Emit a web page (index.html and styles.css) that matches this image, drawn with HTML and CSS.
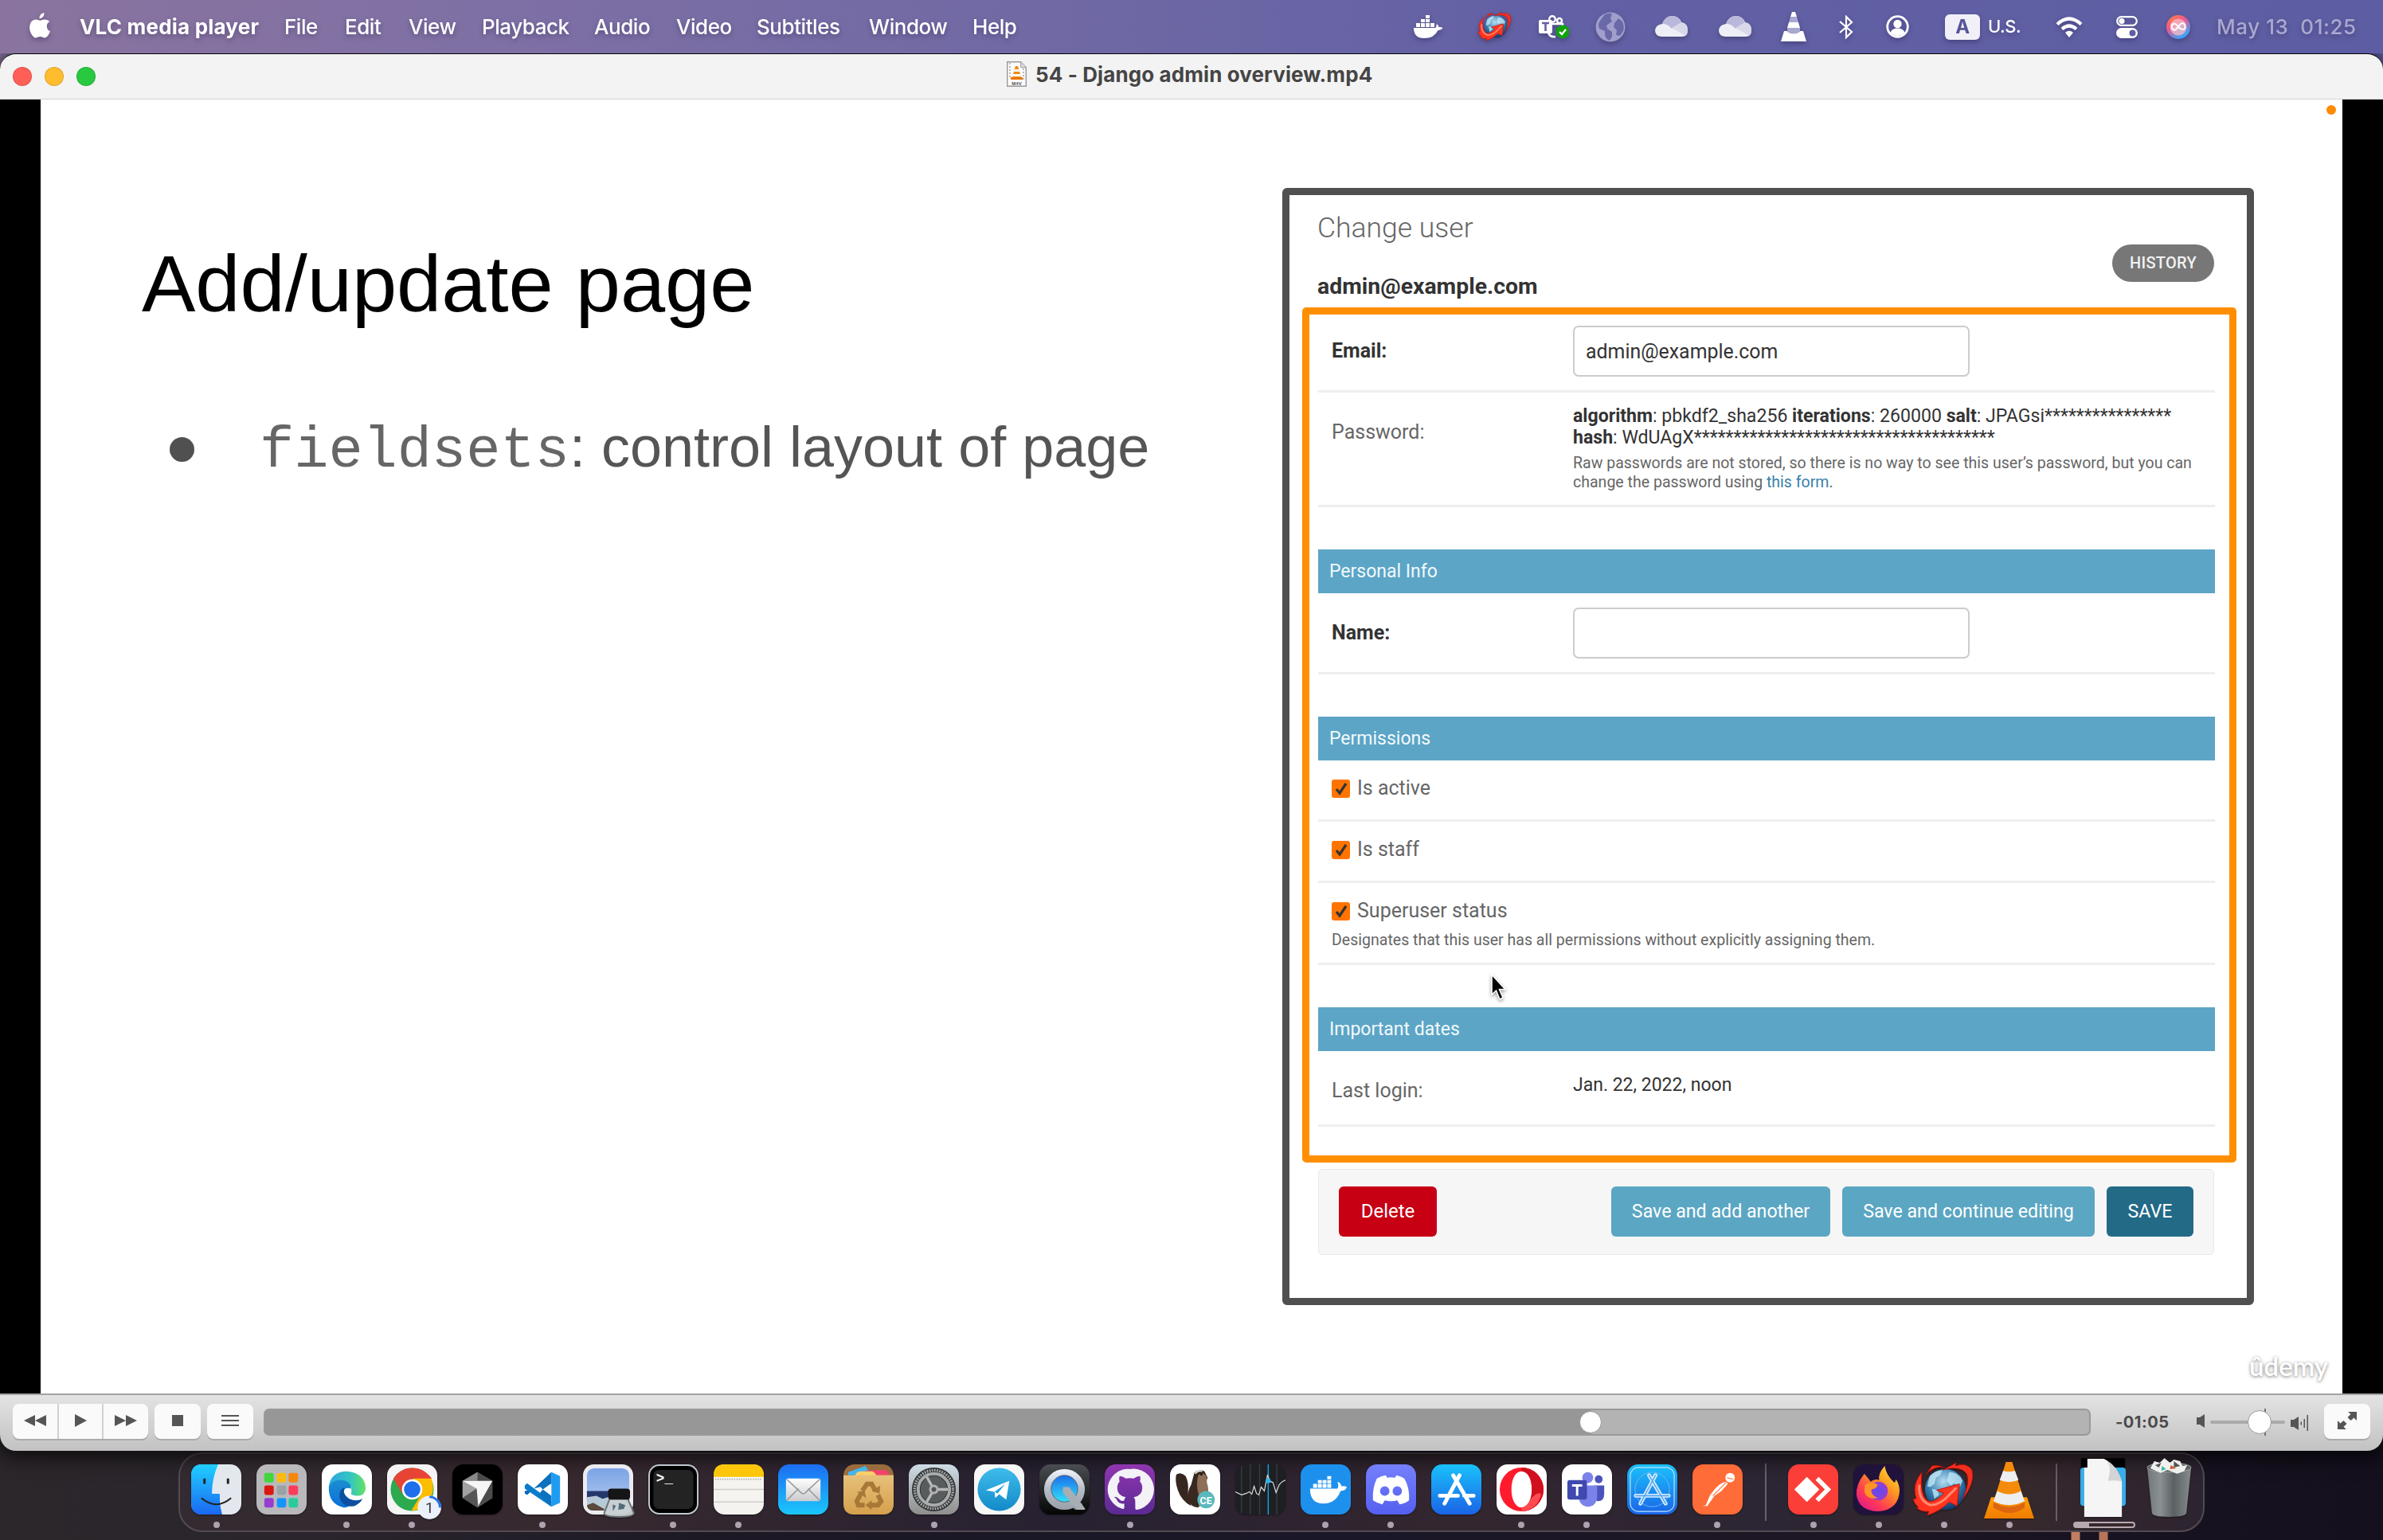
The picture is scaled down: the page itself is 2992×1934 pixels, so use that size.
FILE: index.html
```html
<!DOCTYPE html>
<html lang="en">
<head>
<meta charset="utf-8">
<title>VLC media player</title>
<link rel="stylesheet" href="styles.css">
</head>
<body>
<svg class="defs" width="0" height="0" aria-hidden="true">
  <defs>
    <linearGradient id="finder" x1="0" y1="0" x2="0" y2="1"><stop offset="0" stop-color="#1fd0ff"/><stop offset="1" stop-color="#1b68f2"/></linearGradient>
    <linearGradient id="skyblue" x1="0" y1="0" x2="0" y2="1"><stop offset="0" stop-color="#1ac1fb"/><stop offset="1" stop-color="#1a64e6"/></linearGradient>
    <linearGradient id="mailbg" x1="0" y1="0" x2="0" y2="1"><stop offset="0" stop-color="#1d6df2"/><stop offset="1" stop-color="#1ac8fc"/></linearGradient>
    <linearGradient id="silver" x1="0" y1="0" x2="0" y2="1"><stop offset="0" stop-color="#fff"/><stop offset="1" stop-color="#c9cbcf"/></linearGradient>
    <linearGradient id="steel" x1="0" y1="0" x2="0" y2="1"><stop offset="0" stop-color="#cfdde6"/><stop offset="1" stop-color="#8e8e8c"/></linearGradient>
    <linearGradient id="edgeA" x1="0" y1="0" x2="1" y2="0"><stop offset="0" stop-color="#2aa6e4"/><stop offset=".6" stop-color="#35c6c0"/><stop offset="1" stop-color="#62e35e"/></linearGradient>
    <linearGradient id="edgeB" x1="0" y1="0" x2="0" y2="1"><stop offset="0" stop-color="#1b8fd0"/><stop offset="1" stop-color="#0a6fd8"/></linearGradient>
    <linearGradient id="tele" x1="0" y1="0" x2="0" y2="1"><stop offset="0" stop-color="#3fbcec"/><stop offset="1" stop-color="#128ac8"/></linearGradient>
    <linearGradient id="dark" x1="0" y1="0" x2="0" y2="1"><stop offset="0" stop-color="#4a4e52"/><stop offset="1" stop-color="#050505"/></linearGradient>
    <linearGradient id="purple" x1="0" y1="0" x2="0" y2="1"><stop offset="0" stop-color="#9036b0"/><stop offset="1" stop-color="#5b2a93"/></linearGradient>
    <linearGradient id="disc" x1="0" y1="0" x2="0" y2="1"><stop offset="0" stop-color="#7480fb"/><stop offset="1" stop-color="#5560f0"/></linearGradient>
    <linearGradient id="paper" x1="0" y1="0" x2="0" y2="1"><stop offset="0" stop-color="#e6c07a"/><stop offset="1" stop-color="#d5a04c"/></linearGradient>
    <linearGradient id="fox" x1="1" y1="0" x2=".2" y2="1"><stop offset="0" stop-color="#fff044"/><stop offset=".4" stop-color="#ff9a1f"/><stop offset=".75" stop-color="#ff3a55"/><stop offset="1" stop-color="#e01a8a"/></linearGradient>
    <linearGradient id="cone" x1="0" y1="0" x2="0" y2="1"><stop offset="0" stop-color="#ff9d0a"/><stop offset="1" stop-color="#f07c00"/></linearGradient>
    <linearGradient id="can" x1="0" y1="0" x2="1" y2="0"><stop offset="0" stop-color="#70777a"/><stop offset=".3" stop-color="#8b9193"/><stop offset=".6" stop-color="#5b6163"/><stop offset="1" stop-color="#868c8e"/></linearGradient>
    <linearGradient id="sky" x1="0" y1="0" x2="0" y2="1"><stop offset="0" stop-color="#7ba4e6"/><stop offset="1" stop-color="#b8cdf0"/></linearGradient>
    <radialGradient id="orb" cx=".45" cy=".3" r=".75"><stop offset="0" stop-color="#b4dcf0"/><stop offset=".5" stop-color="#3c84b4"/><stop offset="1" stop-color="#0a2c5c"/></radialGradient>
    <radialGradient id="foxeye"><stop offset="0" stop-color="#5a4cf0"/><stop offset="1" stop-color="#9a3cd0"/></radialGradient>
    <linearGradient id="qt" x1="0" y1="0" x2="0" y2="1"><stop offset="0" stop-color="#f2f6fc"/><stop offset=".5" stop-color="#b4bcc8"/><stop offset="1" stop-color="#9aa0a8"/></linearGradient>
    <linearGradient id="qtin" x1="0" y1="0" x2="0" y2="1"><stop offset="0" stop-color="#1b6fe8"/><stop offset="1" stop-color="#35e0fa"/></linearGradient>
    <linearGradient id="siri" x1="0" y1="0" x2=".6" y2="1"><stop offset="0" stop-color="#ff8a30"/><stop offset=".45" stop-color="#f0568c"/><stop offset="1" stop-color="#30a8ff"/></linearGradient>
    <g id="orbicon">
      <circle cx="41" cy="34" r="26" fill="url(#orb)"/>
      <path d="M21 17q8-8 16-7l-3 6-5 3-2 8-5 4-4-1zM46 12q12 0 17 11l-3 7-8-4-4 3-5-6zM24 33l7 2 2 6-6 5z" fill="#c8ecf8" opacity=".75"/>
      <path d="M11 12Q2 24 2 34Q2 40 4 46L0 46Q1 52 7 57L4 57Q10 63 20 62L18 67Q34 62 46 50L56 55L59 27L30 35L39 39Q28 51 19 49Q8 42 11 12Z" fill="#ff3420" stroke="#c01208" stroke-width="1"/>
      <path d="M8 28Q6 48 22 54Q34 54 46 41L55 32" fill="none" stroke="#ff8a6e" stroke-width="3"/>
      <path d="M16 15Q28 3 40 6Q32 2 24 4ZM38 9L55 0L54 4Q68-1 75 9Q80 24 63 47Q73 24 68 14Q60 3 38 9Z" fill="#f2301f" stroke="#b20c08" stroke-width=".8"/>
    </g>
  </defs>
</svg>
<div class="desktop">
  <nav class="menubar">
    <svg class="i-apple" width="26" height="32" viewBox="0 0 26 32" fill="#fff"><path d="M18.5 0q.3 3-1.6 5.200q-1.900 2.200-4.400 2.100q-.2-2.900 1.600-5Q15.900.3 18.500 0zM25.300 11q-3.600 2.200-3.500 6 .1 4.700 4.200 6.300-1 3-3 5.700-1.700 2.400-3.800 2.500-1.300 0-2.800-.7-1.500-.7-3-.7-1.500 0-3.100.7-1.500.7-2.600.7-2.200 0-4.200-2.900Q0 23.800.1 18.300q.1-4.500 2.400-7.200 2.200-2.600 5.400-2.700 1.400 0 3 .7 1.900.8 2.500.8.500 0 2.400-.8 2-.8 3.500-.7 3.900.2 6 2.600z"/></svg>
    <b class="app">VLC media player</b>
    <span>File</span><span>Edit</span><span>View</span><span>Playback</span><span>Audio</span><span>Video</span><span>Subtitles</span><span>Window</span><span>Help</span>
    <svg width="38" height="30" viewBox="0 0 38 30" fill="#fff"><path d="M4 10h5v5H4zM10 10h5v5h-5zM16 10h5v5h-5zM22 10h5v5h-5zM10 5h5v4h-5zM16 5h5v4h-5zM16 0h5v4h-5zM1 16h27q2-1 1.500-5 3 1.500 3 4 3-.5 5 1-2 3-6 3Q27 29 14 29 1 29 1 16z"/></svg>
    <svg width="42" height="37" viewBox="0 0 78 68" overflow="visible"><use href="#orbicon"/></svg>
    <svg width="38" height="30" viewBox="0 0 38 30"><g fill="none" stroke="#fff" stroke-width="2.500"><circle cx="17" cy="5" r="3.800"/><circle cx="26" cy="7" r="3"/><path d="M17 11h13v8M12 22q2 6 9 5"/></g><rect y="6" width="17" height="17" rx="2" fill="#fff"/><path d="M4 10h9M8.500 10v10" stroke="#6361a5" stroke-width="2.600"/><circle cx="30" cy="21" r="8.500" fill="#13a10e"/><path d="M26 21l3 3 5-6" stroke="#fff" stroke-width="2.200" fill="none"/></svg>
    <svg width="38" height="38" viewBox="0 0 38 38"><circle cx="19" cy="19" r="18.500" fill="#a09fcb"/><path d="M12 3q5-2 9-1l-2 6 2 4-7 5 1 4 6 4 0 6-3 5q-5-2-6-7l0-5-7-3q-2-6 1-10zM29 8l5 4q3 7 1 12l-4 6-5-1 1-6-4-4 1-5z" fill="#6a69a8"/></svg>
    <svg width="41" height="27" viewBox="0 0 41 27"><path d="M8 26Q0 25 0 18q1-7 9-8Q13 0 21 0q9 0 12 8 8 1 8 10 0 8-7 8z" fill="#eeeef6"/><path d="M9 10Q13 0 21 0q9 0 12 9l-12 7Q15 9 9 10z" fill="#b9b8da"/><path d="M33 8q8 2 8 10 0 4-3 7L21 15z" fill="#d8d8ea"/></svg>
    <svg width="41" height="27" viewBox="0 0 41 27"><path d="M8 26Q0 25 0 18q1-7 9-8Q13 0 21 0q9 0 12 8 8 1 8 10 0 8-7 8z" fill="#eeeef6"/><path d="M9 10Q13 0 21 0q9 0 12 9l-12 7Q15 9 9 10z" fill="#b9b8da"/><path d="M33 8q8 2 8 10 0 4-3 7L21 15z" fill="#d8d8ea"/></svg>
    <svg width="32" height="37" viewBox="0 0 32 37"><path d="M14 0h4l2 6h-8zM10 13h12l2 7H8zM4 24h4q8 6 16 0h4l4 13H0z" fill="#fff"/><path d="M12 6h8l2 7H10zM8 20h16v5q-8 5-16 0z" fill="#a9a8d0"/></svg>
    <svg width="18" height="30" viewBox="0 0 18 30"><path d="M1 8l15 13-7 7V2l7 7L1 22" fill="none" stroke="#fff" stroke-width="2.200"/></svg>
    <svg width="29" height="29" viewBox="0 0 29 29"><circle cx="14.500" cy="14.500" r="12.800" fill="none" stroke="#fff" stroke-width="2.800"/><circle cx="14.500" cy="11" r="5.200" fill="#fff"/><path d="M5.500 22q2-5.500 9-5.500t9 5.500q-4 4-9 4t-9-4z" fill="#fff"/></svg>
    <div class="input-source"><b>A</b><i>U.S.</i></div>
    <svg width="34" height="26" viewBox="0 0 34 26" fill="none" stroke="#fff" stroke-width="4.200"><path d="M2 9.500q15-14 30 0M8 15.500q9-8 18 0"/><path d="M17 26l-5-6q5-4.500 10 0z" fill="#fff" stroke="none"/></svg>
    <svg width="27" height="28" viewBox="0 0 27 28"><rect x="1.200" y="1.200" width="24.600" height="10.600" rx="5.300" fill="none" stroke="#fff" stroke-width="2.200"/><circle cx="7" cy="6.500" r="3.600" fill="#fff"/><rect y="15" width="27" height="13" rx="6.500" fill="#fff"/><circle cx="20.500" cy="21.500" r="4" fill="#5f5fa4"/></svg>
    <svg width="30" height="30" viewBox="0 0 30 30"><circle cx="15" cy="15" r="15" fill="url(#siri)"/><circle cx="15" cy="15" r="10.500" fill="#f8c4cc" opacity=".7"/><path d="M15 15q-3-5-6-4t-2 5q2 4 5 2l6-7q3-2 5 1 2 5-2 6-3 0-6-3z" fill="none" stroke="#fff" stroke-width="2"/></svg>
    <span class="clock">May 13&nbsp; 01:25</span>
  </nav>

  <section class="window">
    <header class="titlebar">
      <div class="lights"><i class="red"></i><i class="yellow"></i><i class="green"></i></div>
      <div class="title">
        <svg width="25" height="32" viewBox="0 0 25 32"><path d="M.7.700h17l6.600 7v23.600H.700z" fill="#fbfbfb" stroke="#999" stroke-width="1.400"/><path d="M17.700.700v7h6.600" fill="#ddd" stroke="#999"/><path d="M4 2v20M21 9v14" stroke="#777" stroke-dasharray="2 2"/><path d="M11 6h3l5 17H6z" fill="#f28a10"/><path d="M10 10h5l1 3H9zM8 16h9l1 3H7z" fill="#fff"/><path d="M5 20h15v3H5z" fill="#e87808"/><text x="12.500" y="30" text-anchor="middle" class="filetype">M4V</text></svg>
        <b>54 - Django admin overview.mp4</b>
      </div>
    </header>

    <main class="video">
      <div class="slide">
        <div class="slide-text">
          <h1>Add/update page</h1>
          <p class="bullet"><i></i><span><code>fieldsets</code>: control layout of page</span></p>
        </div>
        <div class="card">
          <div class="card-head">
            <div><h2>Change user</h2><h3>admin@example.com</h3></div>
            <span class="history">HISTORY</span>
          </div>
          <div class="fieldsets">
            <div class="row email"><label class="strong">Email:</label><div class="field"><span>admin@example.com</span></div></div>
            <div class="row password"><label>Password:</label>
              <div class="hash">
                <p><b>algorithm</b>: pbkdf2_sha256 <b>iterations</b>: 260000 <b>salt</b>: JPAGsi****************</p>
                <p><b>hash</b>: WdUAgX**************************************</p>
                <p class="help raw">Raw passwords are not stored, so there is no way to see this user’s password, but you can</p>
                <p class="help form">change the password using <a>this form</a>.</p>
              </div>
            </div>
            <div class="bar"><span>Personal Info</span></div>
            <div class="row name"><label class="strong">Name:</label><div class="field"></div></div>
            <div class="bar"><span>Permissions</span></div>
            <div class="check"><div><svg width="23" height="23" viewBox="0 0 23 23"><rect width="23" height="23" rx="3" fill="#ff7400"/><path d="M6 12l4 5 8-12" fill="none" stroke="#333" stroke-width="3.200"/></svg><span>Is active</span></div></div>
            <div class="check"><div><svg width="23" height="23" viewBox="0 0 23 23"><rect width="23" height="23" rx="3" fill="#ff7400"/><path d="M6 12l4 5 8-12" fill="none" stroke="#333" stroke-width="3.200"/></svg><span>Is staff</span></div></div>
            <div class="check super"><div><svg width="23" height="23" viewBox="0 0 23 23"><rect width="23" height="23" rx="3" fill="#ff7400"/><path d="M6 12l4 5 8-12" fill="none" stroke="#333" stroke-width="3.200"/></svg><span>Superuser status</span></div><p class="help desig">Designates that this user has all permissions without explicitly assigning them.</p></div>
            <div class="bar last"><span>Important dates</span></div>
            <div class="row login"><label>Last login:</label><span class="date">Jan. 22, 2022, noon</span></div>
          </div>
          <div class="submit-row">
            <span class="btn delete">Delete</span><span class="btn another">Save and add another</span><span class="btn continue">Save and continue editing</span><span class="btn save">SAVE</span>
          </div>
        </div>
        <i class="mic-dot"></i>
        <span class="watermark">ûdemy</span>
        <svg class="cursor" width="22" height="36" viewBox="0 0 22 36"><path d="M2 1v25l5.500-5 4.500 11 4-2-4.500-10.500H19z" fill="#000" stroke="#fff" stroke-width="1.600"/></svg>
      </div>
    </main>

    <footer class="controls">
      <div class="group">
        <span><svg width="28" height="14" viewBox="0 0 28 14"><path d="M14 0v14L0 7zM28 0v14L14 7z"/></svg></span>
        <span><svg width="15" height="16" viewBox="0 0 15 16"><path d="M0 0l15 8-15 8z"/></svg></span>
        <span><svg width="28" height="14" viewBox="0 0 28 14"><path d="M0 0l14 7-14 7zM14 0l14 7-14 7z"/></svg></span>
      </div>
      <span class="ctl"><svg width="14" height="14"><path d="M0 0h14v14H0z"/></svg></span>
      <span class="ctl list"><svg width="22" height="14"><path d="M0 0h22v2H0zM0 6h22v2H0zM0 12h22v2H0z"/></svg></span>
      <div class="seek"><div class="played"></div><i class="knob"></i></div>
      <b class="time">-01:05</b>
      <svg class="quiet" width="10" height="17" viewBox="0 0 10 17"><path d="M0 4h4l6-4v17l-6-4H0z"/></svg>
      <div class="volume"><i class="tick"></i><i class="knob"></i></div>
      <svg class="loud" width="23" height="20" viewBox="0 0 23 20"><path d="M0 6h4l6-4v17l-6-4H0zM12.500 8.500h1.500v4h-1.500zM16.500 5h1.500v11h-1.500zM20.500 0H22v20h-1.500z"/></svg>
      <span class="ctl full"><svg width="26" height="24" viewBox="0 0 26 24"><path d="M14 1h11v11l-3.500-3.500-4 3.500-4-4 4-4zM1 23V12l3.500 3.500 4-3.500 4 4-4 4L12 23z"/></svg></span>
    </footer>
  </section>

  <div class="dock">
    <div class="app on"><svg viewBox="0 0 64 64"><rect width="64" height="64" rx="14" fill="#e3e7ee"/><path d="M14 0h21Q27 18 27 37h10q-1 14 3 27H14Q0 64 0 50V14Q0 0 14 0z" fill="url(#finder)"/><path d="M35 0Q27 18 27 37h10q-1 14 3 27" fill="none" stroke="#f2f6fa" stroke-width=".8"/><path d="M17 18v7M47 18v7" stroke="#222" stroke-width="3"/><path d="M13 43q19 16 38 0" fill="none" stroke="#222" stroke-width="2"/></svg><i></i></div>
    <div class="app"><svg viewBox="0 0 64 64"><rect width="64" height="64" rx="14" fill="#b9b8bb"/><g><rect x="10" y="11" width="12" height="12" rx="2.500" fill="#41d63c"/><rect x="26" y="11" width="12" height="12" rx="2.500" fill="#fdbb10"/><rect x="41" y="11" width="12" height="12" rx="2.500" fill="#f5870f"/><rect x="10" y="27" width="12" height="12" rx="2.500" fill="#dc1611"/><rect x="26" y="27" width="12" height="12" rx="2.500" fill="#9aa1a5"/><rect x="41" y="27" width="12" height="12" rx="2.500" fill="#fb3b59"/><rect x="10" y="43" width="12" height="12" rx="2.500" fill="#963cd0"/><rect x="26" y="43" width="12" height="12" rx="2.500" fill="#1595fb"/><rect x="41" y="43" width="12" height="12" rx="2.500" fill="#29cb9c"/></g></svg><i></i></div>
    <div class="app on"><svg viewBox="0 0 64 64"><rect width="64" height="64" rx="14" fill="#fff"/><path d="M9 28Q12 9 32 9q23 2 24 22-1 10-12 9-9-1-6-5Q38 22 24 20 14 20 9 28z" fill="url(#edgeA)"/><path d="M9 28Q14 19 26 20q12 2 11 11-7-3-10 4-3 12 10 16-3 4-9 4Q8 51 9 28z" fill="url(#edgeB)"/><path d="M27 30q-7 6-3 16 6 10 18 7 7-3 10-9-8 4-17 0-9-6-6-13z" fill="#0c4fa0"/></svg><i></i></div>
    <div class="app on"><svg viewBox="0 0 64 64"><rect width="64" height="64" rx="14" fill="#f4f4f4"/><circle cx="32" cy="32" r="27.500" fill="#2da94f"/><path d="M32 17h24q4 10 2 19-6 23-27 23l12-20z" fill="#fdbd00"/><path d="M8 18Q17 4.500 32 4.500T57 18H32L20 38z" fill="#e84436"/><circle cx="32" cy="32" r="13" fill="#fff"/><circle cx="32" cy="32" r="10.500" fill="#1f6fec"/><circle cx="54" cy="55" r="15" fill="#eaf1fc"/><path d="M54 40a15 15 0 0 1 15 15h-3a12 12 0 0 0-12-12z" fill="#1f6fec"/><text x="54" y="62" text-anchor="middle" class="profile">1</text></svg><i></i></div>
    <div class="app"><svg viewBox="0 0 64 64"><rect width="64" height="64" rx="14" fill="#000"/><path d="M32 10l19 11v22L32 55 13 43V21z" fill="#6d6d6d"/><path d="M32 10l19 11H13z" fill="#4a4a4a"/><path d="M32 10v11H13z" fill="#8a8a8a"/><path d="M13 21v22l18-12z" fill="#a2a2a2"/><path d="M13 43l18-12 1 24z" fill="#555"/><path d="M51 21v22L33 53z" fill="#4b4b4b"/><path d="M13 21h38L33 53l-2-22z" fill="#f6f6f6"/></svg><i></i></div>
    <div class="app on"><svg viewBox="0 0 64 64"><rect width="64" height="64" rx="14" fill="#fff"/><path d="M43 10L12 39l-3-2v-3l34-9z" fill="#0b6ab5"/><path d="M9 27l3-3 31 23v7L9 31z" fill="#0a7ccb"/><path d="M43 10L27 27l5 5 11-8zM43 54L27 38l5-6 11 8z" fill="#0b72c0"/><path d="M43 10l11 5v34l-11 5z" fill="#1f9cf0"/></svg><i></i></div>
    <div class="app"><svg viewBox="0 0 64 64"><rect width="64" height="64" rx="14" fill="#ececf0"/><rect x="5" y="5" width="54" height="54" rx="9" fill="url(#sky)"/><path d="M5 34h54v12H5z" fill="#24386a"/><path d="M5 42l12-2 8 4 10-3 24 6v3q0 9-9 9H14q-9 0-9-9z" fill="#b6c9d6"/><path d="M5 52l8-3 14 8v2H14q-9 0-9-7z" fill="#5b4a3e"/><path d="M34 44l-7 18q0 5 19 5t19-5l-8-18z" fill="#c9d0d2" stroke="#687074" stroke-width="2" opacity=".95"/><path d="M38 51l4 2-4 7zM46 49l8 3-2 5-7 1z" fill="#536b78"/><rect x="32" y="31" width="28" height="14" rx="4" fill="#151515"/></svg><i></i></div>
    <div class="app on"><svg viewBox="0 0 64 64"><rect width="64" height="64" rx="14" fill="#bfc9ce"/><rect x="2" y="2" width="60" height="60" rx="12" fill="#000"/><rect x="6.500" y="7" width="51" height="50" rx="7" fill="#232323"/><text x="10" y="23" class="prompt">&gt;_</text></svg><i></i></div>
    <div class="app on"><svg viewBox="0 0 64 64"><rect width="64" height="64" rx="14" fill="#f4f3f0"/><path d="M0 16V14Q0 0 14 0h36q14 0 14 14v2z" fill="#fdc60b"/><path d="M2 19h60" stroke="#aaa" stroke-width="1.500" stroke-dasharray="1.500 1.500"/><path d="M0 32h64M0 48h64" stroke="#cfcecb" stroke-width="1.500"/></svg><i></i></div>
    <div class="app"><svg viewBox="0 0 64 64"><rect width="64" height="64" rx="14" fill="url(#mailbg)"/><rect x="10" y="18" width="44" height="29" rx="2.500" fill="url(#silver)"/><path d="M11 46l15-15M53 46L38 31M11 19l18 17q3 3 6 0l18-17" fill="none" stroke="#999" stroke-width="1.600"/></svg><i></i></div>
    <div class="app"><svg viewBox="0 0 64 64"><rect width="64" height="64" rx="14" fill="#9a6c3e"/><path d="M6 10l22-8 8 12H6z" fill="#42b6f0"/><path d="M28 8l26-1q4 2 4 8H28z" fill="#f4426c"/><path d="M16 12q2-3 6-3h14q3 0 6 5h20v2H14z" fill="#f8cf68"/><path d="M0 14h64v36q0 14-14 14H14Q0 64 0 50z" fill="url(#paper)"/><g fill="none" stroke="#a87838" stroke-width="6"><path d="M24 34l6-9h6l5 9M44 39l4 8-4 5h-9M27 52h-8l-2-5 5-9"/></g><path d="M36 34l10 3 1-10zM36 46v12l-8-6zM17 35l10-1 2 9z" fill="#a87838"/></svg><i></i></div>
    <div class="app on"><svg viewBox="0 0 64 64"><rect width="64" height="64" rx="14" fill="url(#steel)"/><circle cx="32" cy="32" r="28" fill="#333536"/><circle cx="32" cy="32" r="24.500" fill="none" stroke="#a8abab" stroke-width="3.500" stroke-dasharray="1.800 1.400"/><circle cx="32" cy="32" r="20" fill="none" stroke="#a9acac" stroke-width="4"/><circle cx="32" cy="32" r="17" fill="#595c5d"/><path d="M32 32h18M32 32l-9-16M32 32l-9 16" stroke="#b6b8b8" stroke-width="3.500"/><circle cx="32" cy="32" r="6" fill="#b0b3b3"/><circle cx="32" cy="32" r="3" fill="#555"/></svg><i></i></div>
    <div class="app"><svg viewBox="0 0 64 64"><rect width="64" height="64" rx="14" fill="#f7f7f7"/><circle cx="32" cy="32" r="27.500" fill="url(#tele)"/><path d="M15 33l30-12-4 24-9-7-5 5-1-8-11-2zm11 2l14-10-10 12z" fill="#fff" fill-rule="evenodd"/></svg><i></i></div>
    <div class="app"><svg viewBox="0 0 64 64"><rect width="64" height="64" rx="14" fill="url(#dark)"/><path d="M36 38l18 12 4 8H46l-12-9z" fill="#8a8f96"/><circle cx="32" cy="32" r="26" fill="url(#qt)"/><circle cx="32" cy="31" r="17" fill="url(#qtin)" stroke="#5a6370"/><path d="M30 29h8l20 27v2H48L30 36z" fill="#a9aeb5"/></svg><i></i></div>
    <div class="app on"><svg viewBox="0 0 64 64"><rect width="64" height="64" rx="14" fill="url(#purple)"/><path d="M32 6a26 26 0 0 0-9 51q2 0 2-2v-5q-7 1-9-4-1-3-4-4 3-2 6 2 3 4 7 2 0-3 2-4-11-2-11-12 0-5 3-8-1-4 0-7 4 0 8 3 5-1 10 0 4-3 8-3 1 3 0 7 3 3 3 8 0 10-11 12 2 2 2 6v8q0 2 2 2A26 26 0 0 0 32 6z" fill="#f3f2f7"/></svg><i></i></div>
    <div class="app"><svg viewBox="0 0 64 64"><rect width="64" height="64" rx="14" fill="#fff"/><path d="M8 13q6-4 12 2 4 8 3 20 0 8 4 18-12-6-17-20-4-12-2-20z" fill="#362620"/><path d="M31 11q6-6 13-2l4 8-3 7 3 12-7 10-5 9q-9 0-13-9-2-10 4-20z" fill="#38281f"/><path d="M36 14q6-6 11 2l0 7q3 9 1 14-2 13-12 18 4-12 0-18-3-12 0-23z" fill="#8d6e56"/><path d="M32 12q5-5 9-3" fill="none" stroke="#fff" stroke-width="1.500"/><circle cx="40" cy="13" r="1.500" fill="#111"/><circle cx="46" cy="45" r="11" fill="#5bb8be"/><text x="46" y="50.500" text-anchor="middle" class="ce">CE</text></svg><i></i></div>
    <div class="app"><svg viewBox="0 0 64 64"><rect width="64" height="64" rx="14" fill="#1d1f22"/><path d="M8 2v60M19 0v64M31 0v64M53 0v64" stroke="#383b40" stroke-width="1.500"/><path d="M42 0v64" stroke="#1b9fe0" stroke-width="1.500"/><path d="M0 35l8 4 6-2 4-2 3 3 3-10 3 9 3 2 3-10 4 5 4-20 4 8 3 1 4 13 4-10 4-4 4-2" fill="none" stroke="#ddd" stroke-width="1.200"/><circle cx="42" cy="21" r="3" fill="#26b4f4"/></svg><i></i></div>
    <div class="app on"><svg viewBox="0 0 64 64"><rect width="64" height="64" rx="14" fill="#1d90ed"/><path d="M16 25h5v5h-5zM22 25h5v5h-5zM28 25h5v5h-5zM34 25h5v5h-5zM22 20h5v4h-5zM28 20h5v4h-5zM34 20h5v4h-5zM34 15h5v4h-5zM12 31h35q2-3 0-9 5 2 5 6 4-1 7 1-2 5-8 5-6 16-22 16Q12 50 12 31z" fill="#fff"/></svg><i></i></div>
    <div class="app on"><svg viewBox="0 0 64 64"><rect width="64" height="64" rx="14" fill="url(#disc)"/><path d="M26 15l-1-1q-6 1-11 4-6 12-5 28 6 4 12 5l3-5q8 2 16 0l3 5q7-1 12-5 1-16-6-28-5-3-10-4l-2 3q-5-1-10 0zM24 28a5 5 0 0 1 0 12 5 5 0 0 1 0-12zm16 0a5 5 0 0 1 0 12 5 5 0 0 1 0-12z" fill="#fff" fill-rule="evenodd"/></svg><i></i></div>
    <div class="app"><svg viewBox="0 0 64 64"><rect width="64" height="64" rx="14" fill="url(#skyblue)"/><path d="M28 14l21 36M36 14L17 50M11 40h23M42 40h12" stroke="#fff" stroke-width="5" stroke-linecap="round"/></svg><i></i></div>
    <div class="app on"><svg viewBox="0 0 64 64"><rect width="64" height="64" rx="14" fill="#fff"/><path d="M32 4a28 28 0 0 0 0 56 28 28 0 0 0 0-56zm0 5c8 0 13 10 13 23s-5 23-13 23-13-10-13-23 5-23 13-23z" fill="#ff1b2d" fill-rule="evenodd"/><path d="M32 4a28 28 0 0 1 0 56v-5c8 0 13-10 13-23S40 9 32 9z" fill="#d0101f"/><path d="M44 44q8-10 13-6-5 20-25 22v-5q7-1 12-11z" fill="#ff4a50"/></svg><i></i></div>
    <div class="app on"><svg viewBox="0 0 64 64"><rect width="64" height="64" rx="14" fill="#fff"/><circle cx="47" cy="19" r="5" fill="#4b53bc"/><circle cx="33" cy="17" r="7" fill="#7b83eb"/><path d="M41 27h13v11q0 9-8 9-5-1-5-6z" fill="#4b53bc"/><path d="M22 27h23v15q-1 12-12 12-11-1-11-12z" fill="#7b83eb"/><rect x="7" y="20" width="25" height="25" rx="3" fill="#4049b0"/><path d="M13 27h13M19.500 27v13" stroke="#fff" stroke-width="3"/></svg><i></i></div>
    <div class="app"><svg viewBox="0 0 64 64"><rect width="64" height="64" rx="14" fill="url(#skyblue)"/><rect x="4" y="4" width="56" height="56" rx="10" fill="none" stroke="#bfe3fb" stroke-width="1.200"/><circle cx="32" cy="32" r="22" fill="none" stroke="#6ab8f4"/><g stroke="#d6edfd" stroke-width="5" stroke-linecap="round"><path d="M28 14l21 36M36 14L17 50M11 40h42"/></g><g stroke="#5aa8f0" stroke-width="1.600" stroke-linecap="round"><path d="M28 14l21 36M36 14L17 50M11 40h42"/></g></svg><i></i></div>
    <div class="app on"><svg viewBox="0 0 64 64"><rect width="64" height="64" rx="14" fill="#ff6c37"/><circle cx="48" cy="17" r="6" fill="#fff"/><path d="M43 22q-10 2-18 14l-3 4-5 12-4 1h6l9-13 9-6 8-9z" fill="#fff"/><path d="M43 23L26 40M44 17l8 2" stroke="#ff6c37" stroke-width="1.200"/></svg><i></i></div>
    <s class="sep first"></s>
    <div class="app on"><svg viewBox="0 0 64 64"><rect width="64" height="64" rx="14" fill="#fb3e37"/><path d="M24 16l16 16-16 16L8 32zM35 20l4-4 16 16-16 16-4-4 12-12z" fill="#fff"/></svg><i></i></div>
    <div class="app on"><svg viewBox="0 0 64 64"><rect width="64" height="64" rx="14" fill="#20123a"/><path d="M40 2q-9 10-7 18-6-2-11 2-2-3-8-10-11 14-10 27 3 20 28 21 26-2 27-27-1-10-5-14 0 4-2 4Q42 14 40 2z" fill="url(#fox)"/><circle cx="32" cy="34" r="12" fill="url(#foxeye)"/><path d="M15 26q9-6 16 0-1 5-8 6-1 7 8 11-14 2-17-8z" fill="#ff9326"/></svg><i></i></div>
    <div class="app on"><svg viewBox="0 0 64 64"><use href="#orbicon" x="-7" y="-2"/></svg><i></i></div>
    <div class="app on"><svg viewBox="0 0 64 64"><path d="M9 42h46l9 27H0z" fill="url(#cone)"/><path d="M12 48q20 12 40 0v7q-18 14-40 0z" fill="#dd6410"/><path d="M28-3h8l16 51q-20 12-40 0z" fill="#f48b0a"/><path d="M24.500 8q7 3 15 0L44 20q-12 5-24 0zM17 34q15 8 30 0l5 13q-20 10-40 0z" fill="#eceef0"/></svg><i></i></div>
    <s class="sep second"></s>
    <div class="app files"><svg viewBox="0 0 64 64"><path d="M3-8h56V6H3z" fill="#000"/><rect x="2" y="4" width="58" height="49" rx="4" fill="#39ade8"/><path d="M11-7h21q16 8 23 29v45H7V4h4z" fill="#f5f5f5"/><path d="M32-7Q44 0 37 21q12-1 18 1Q50 2 32-7z" fill="#d3d4d5"/></svg><i></i></div>
    <div class="app trash"><svg viewBox="0 0 64 64"><path d="M4 4h56l-6 58q-1 5-22 5t-22-5z" fill="url(#can)"/><ellipse cx="32" cy="4" rx="28" ry="6" fill="#5b6062" stroke="#a0a4a6"/><path d="M8 5l5-9 7 2 6-6 7 6 5-4 8 2 3 6 6-1-4 8-9 3-12-5-9 4z" fill="#f0f0ee"/><path d="M14 1l8-3-3 6zM38-4l8 6-8 2z" fill="#555"/><path d="M23 2l5 4-6 2z" fill="#30b8a0"/><path d="M34 1l7 4-8 1z" fill="#c76030"/></svg><i></i></div>
  </div>
</div>
</body>
</html>
```
FILE: styles.css
```css
* { box-sizing: border-box; margin: 0; padding: 0; }
html, body { width: 2992px; height: 1934px; overflow: hidden; }
body { font-family: Inter, "Liberation Sans", sans-serif; }
i { font-style: normal; }
.defs { display: block; height: 0; }

.desktop {
  width: 2992px;
  height: 1934px;
  display: flex;
  flex-direction: column;
  background:
    linear-gradient(90deg, transparent 2600px, #c27e60 2601px, #c27e60 2611px, transparent 2612px, transparent 2635px, #b87459 2636px, #b87459 2646px, transparent 2647px) 0 1924px / 2992px 10px no-repeat,
    linear-gradient(90deg, #8a749f 0, #7d6fa5 700px, #6e68a4 1400px, #6361a5 1900px, #5d5da3 2992px) 0 0 / 2992px 100px no-repeat,
    linear-gradient(90deg, #2c272b 0, #2a252c 400px, #1c1824 900px, #1a1728 1700px, #1d1624 2300px, #14101d 2992px);
}

/* menu bar */
.menubar {
  height: 67px;
  padding-left: 37px;
  display: grid;
  grid-template-columns: 63px 257px 76px 80px 92px 141px 103px 101px 141px 130px 553px 82px 76px 71px 75px 80px 78px 73px 59px 74px 139px 76px 63px 63px auto;
  align-items: center;
  color: #fff;
  font-size: 26px;
  line-height: 65px;
  font-weight: 450;
  letter-spacing: -.45px;
  white-space: nowrap;
  filter: drop-shadow(0 3px 3px rgba(30, 20, 60, .35));
}
.menubar .app { font-weight: 700; letter-spacing: .2px; }
.menubar .i-apple { margin-bottom: 4px; }
.input-source { display: flex; align-items: center; gap: 10px; }
.input-source b { width: 44px; height: 32px; border-radius: 6px; background: #f1f0f8; color: #55559a; font-size: 24px; line-height: 32px; text-align: center; }
.input-source i { font-size: 22px; }
.clock { color: #a9a8d0; letter-spacing: .55px; }

/* player window */
.window {
  height: 1755px;
  flex: none;
  border-radius: 20px;
  border-top: 1px solid #000;
  overflow: hidden;
  display: flex;
  flex-direction: column;
  background: #000;
  box-shadow: 0 4px 26px 4px rgba(0, 0, 0, .75);
  clip-path: inset(0 0 -60px 0);
}
.titlebar {
  height: 57px;
  flex: none;
  display: grid;
  grid-template-columns: 1264px auto;
  background: #f3f3f3;
  border-bottom: 1px solid #d4d4d4;
}
.lights { display: flex; gap: 16px; padding: 16px 0 0 16px; }
.lights i { width: 24px; height: 24px; border-radius: 50%; border: 1px solid rgba(0, 0, 0, .12); }
.red { background: #ff5f57; }
.yellow { background: #febc2e; }
.green { background: #28c840; }
.title { display: flex; gap: 11px; align-items: center; height: 50px; color: #454545; font-size: 26px; letter-spacing: .1px; white-space: nowrap; }
.title b { font-weight: 650; }
.filetype { font: 700 6px "Liberation Sans", sans-serif; fill: #555; }

.video { height: 1625px; flex: none; padding: 0 51px; background: #000; }
.slide { position: relative; height: 1625px; display: flex; justify-content: space-between; padding: 111px 111px 0 127px; background: #fff; }
.slide-text { font-family: "Liberation Sans", Arial, sans-serif; }
.slide-text h1 { margin-top: 60px; font-size: 101px; line-height: 120px; font-weight: 400; color: #000; white-space: nowrap; }
.bullet { margin: 100px 0 0 35px; display: flex; align-items: center; gap: 82px; font-size: 72px; line-height: 90px; color: #555; white-space: nowrap; }
.bullet i { width: 31px; height: 31px; border-radius: 50%; background: #505050; }
.bullet code { font-family: "Liberation Mono", "Courier New", monospace; font-size: 72px; color: #666; }

.card {
  width: 1220px;
  height: 1403px;
  border: 9px solid #505050;
  border-radius: 6px;
  background: #fff;
  font-family: Roboto, sans-serif;
  color: #333;
  white-space: nowrap;
}
.card-head { height: 141px; padding: 19px 41px 0 35px; display: flex; justify-content: space-between; }
.card-head h2 { font-size: 35.500px; line-height: 44px; font-weight: 350; color: #666; }
.card-head h3 { margin-top: 34px; font-size: 28.400px; line-height: 36px; font-weight: 700; }
.history { width: 128px; height: 47px; margin-top: 43px; border-radius: 24px; background: #777; color: #f2f2f2; font-size: 20px; line-height: 46px; font-weight: 500; text-align: center; letter-spacing: .3px; }

.fieldsets { width: 1173px; height: 1074px; margin-left: 16px; padding: 0 18px 0 11px; border: 9px solid #ff8f00; border-radius: 5px; }
.row { display: grid; grid-template-columns: 303px auto; padding-left: 17px; border-bottom: 3px solid #eee; align-items: start; }
.row label { font-size: 25px; line-height: 31px; color: #666; }
.row label.strong { font-weight: 700; line-height: 64px; color: #333; }
.field { width: 498px; height: 64px; border: 2px solid #ccc; border-radius: 7px; padding-left: 14px; font-size: 24.900px; line-height: 61px; }
.email { height: 98px; padding-top: 14px; }
.name { height: 102px; padding-top: 18px; }
.password { height: 144px; padding-top: 17px; }
.password label { margin-top: 17px; }
.hash { font-size: 23.100px; line-height: 26.500px; }
.help { font-size: 19.540px; line-height: 23.500px; color: #666; }
.help.raw { margin-top: 7px; }
.help a { color: #3a7fa8; }
.bar { height: 55px; margin-top: 53px; padding-left: 14px; background: #5ca5c6; color: #f2f9fc; font-size: 23px; line-height: 55px; }
.check { height: 77px; padding: 20px 0 0 17px; border-bottom: 3px solid #eee; font-size: 25px; line-height: 30px; color: #666; }
.check div { display: flex; align-items: center; gap: 9px; }
.check.super { height: 103px; }
.check .help { margin-top: 10px; }
.login { height: 95px; padding-top: 27px; }
.login label { margin-top: 7px; }
.date { font-size: 23px; line-height: 31px; }

.submit-row { width: 1125px; height: 108px; margin: 8px 0 0 36px; padding: 21px 25px 0 25px; display: flex; gap: 15px; background: #f6f6f6; border: 1px solid #e8e8e8; border-radius: 5px; }
.btn { height: 63px; border-radius: 6px; background: #5ba6c3; color: #fff; font-size: 23.200px; line-height: 63px; text-align: center; }
.delete { width: 123px; margin-right: auto; background: #c70014; font-size: 24px; }
.another { width: 275px; }
.continue { width: 317px; }
.save { width: 109px; background: #236a87; }

.mic-dot { position: absolute; left: 2870px; top: 7px; width: 12px; height: 12px; border-radius: 50%; background: #ff8a00; }
.watermark { position: absolute; left: 2773px; top: 1568px; font: 600 33px/44px Lato, sans-serif; color: #fff; text-shadow: 0 1px 4px rgba(0, 0, 0, .55); }
.cursor { position: absolute; left: 1820px; top: 1098px; filter: drop-shadow(0 2px 2px rgba(0, 0, 0, .4)); }

/* playback controls */
.controls { height: 72px; flex: none; display: flex; padding: 11px 16px 0; border-top: 2px solid #a2a2a2; background: linear-gradient(#e3e3e3, #c2c2c2); fill: #555; }
.group, .ctl { height: 44px; border-radius: 8px; background: #fafafa; box-shadow: 0 2px 0 #aaa; }
.group { width: 170px; display: grid; grid-template-columns: 56px 54px 56px; gap: 2px; background: #fafafa; }
.group span { display: flex; align-items: center; justify-content: center; padding-bottom: 2px; }
.group span + span { box-shadow: -2px 0 0 #d0d0d0; }
.ctl { width: 58px; margin-left: 8px; display: flex; align-items: center; justify-content: center; padding-bottom: 2px; }
.seek { position: relative; width: 2294px; height: 34px; margin: 6px 0 0 13px; border: 2px solid #999; border-radius: 7px; background: #b3b3b3; }
.played { width: 1665px; height: 30px; background: #979797; }
.knob { position: absolute; border-radius: 50%; background: #fff; border: 1px solid #999; }
.seek .knob { left: 1650px; top: 1px; width: 28px; height: 28px; }
.time { width: 101px; padding-left: 31px; font-size: 20px; line-height: 47px; font-weight: 650; color: #4a4a4a; letter-spacing: .5px; }
.quiet { margin: 13px 0 0 32px; }
.volume { position: relative; width: 94px; height: 4px; margin: 21px 7px 0; border-radius: 2px; background: #aaa; }
.volume .knob { left: 47px; top: -13px; width: 30px; height: 30px; }
.tick { position: absolute; left: 68px; top: -15px; width: 2px; height: 34px; background: #777; }
.loud { margin-top: 14px; }
.full { margin-left: auto; }

/* dock */
.dock { width: 2544px; height: 100px; flex: none; margin: 2px 0 0 224px; padding: 13px 0 0 14px; display: flex; gap: 18.950px; border: 2px solid #524b52; border-radius: 30px; background: linear-gradient(90deg, #332b31, #37292f 500px, #272131 1100px, #33262f 1600px, #2c2533 2000px, #37292d 2300px, #2c2430); }
.dock .app { width: 63px; flex: none; display: flex; flex-direction: column; align-items: center; }
.dock svg { width: 63px; height: 63px; flex: none; overflow: visible; filter: drop-shadow(0 1px 1px rgba(0, 0, 0, .4)); }
.dock .app i { width: 8px; height: 8px; flex: none; margin-top: 9px; border-radius: 50%; }
.dock .on i { background: #aea2af; }
.sep { width: 2px; height: 72px; flex: none; background: #6a6068; margin-top: -1px; }
.sep.first { margin-left: 9px; margin-right: 9px; }
.sep.second { margin-left: 8px; margin-right: 8px; }
.dock .files i { width: 78px; border-radius: 4px; border: 2px solid #b8a8b0; border-left-width: 20px; background: #37292d; }
.profile { font: 400 19px Roboto, sans-serif; fill: #333; }
.prompt { font: 700 18px "Liberation Mono", monospace; fill: #fff; }
.ce { font: 700 13px Roboto, sans-serif; fill: #fff; }
```
